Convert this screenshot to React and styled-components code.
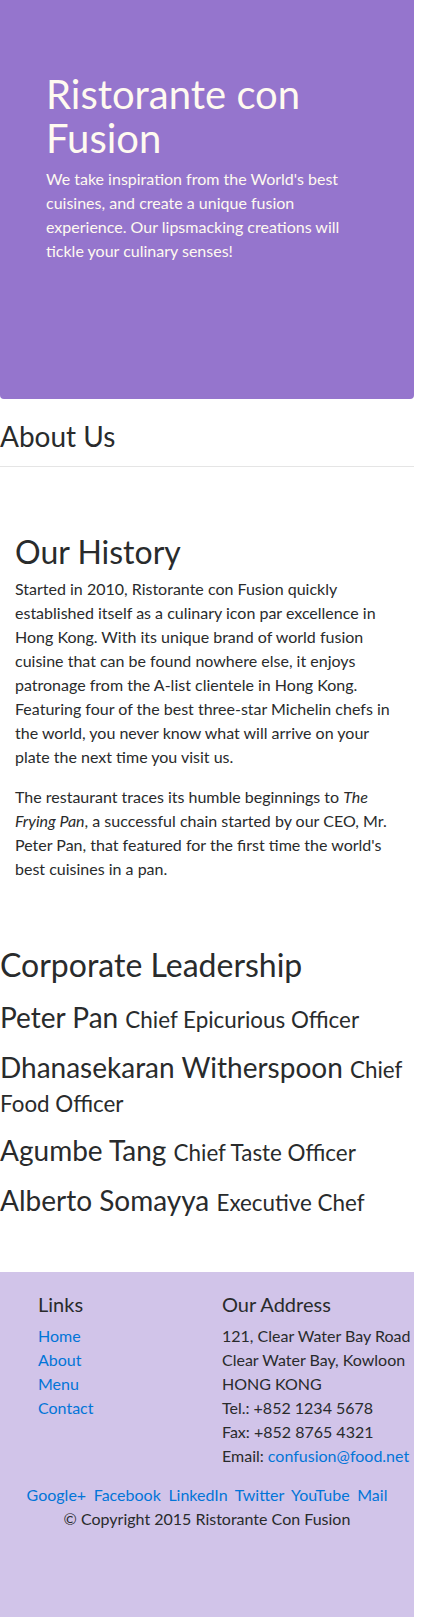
import React from "react"
import styled, { createGlobalStyle } from "styled-components"

const GlobalStyle = createGlobalStyle`
  html, body {
    margin: 0;
    padding: 0;
    background: #fff;
  }
  body {
    font-family: Lato, "Open Sans", sans-serif;
    font-size: 16px;
    line-height: 24px;
    color: #292b2c;
  }
  a {
    color: #0275d8;
    text-decoration: none;
  }
`

const Page = styled.div`
  width: 414px;
  min-height: 100vh;
  display: flex;
  flex-direction: column;
`

const Jumbotron = styled.header`
  background-color: #9575cd;
  color: floralwhite;
  padding: 72px 46px 136px;
  border-radius: 0 0 4px 4px;
`

const HeroTitle = styled.h1`
  margin: 0 0 7px;
  font-size: 40px;
  line-height: 44px;
  font-weight: 400;
`

const HeroText = styled.p`
  margin: 0;
`

const Main = styled.main`
  padding-bottom: 55px;
`

const PageTitle = styled.h3`
  margin: 21px 0 0;
  font-size: 28px;
  line-height: 1.2;
  font-weight: 400;
`

const Divider = styled.hr`
  margin: 12px 0 0;
  border: 0;
  border-top: 1px solid rgba(0, 0, 0, 0.1);
`

const History = styled.section`
  padding: 66px 15px 0;
`

const SectionTitle = styled.h2`
  margin: 0 0 6px;
  font-size: 32px;
  line-height: 1.2;
  font-weight: 400;
`

const Para = styled.p`
  margin: 0 0 16px;
`

const Leadership = styled.section`
  padding-top: 49px;
`

const LeaderList = styled.div`
  padding-top: 11px;
`

const Leader = styled.h3`
  margin: 0 0 16px;
  font-size: 28px;
  line-height: 1.2;
  font-weight: 400;

  &:last-child {
    margin-bottom: 0;
  }
`

const Role = styled.small`
  font-size: 80%;
`

const Footer = styled.footer`
  flex: 1;
  background-color: #d1c4e9;
  padding: 20px 0;
`

const FooterRow = styled.div`
  display: grid;
  grid-template-columns: 184px 1fr;
  padding-left: 38px;
  margin-bottom: 15px;
`

const FooterHeading = styled.h5`
  margin: 0 0 8px;
  font-size: 20px;
  line-height: 24px;
  font-weight: 400;
`

const LinkList = styled.ul`
  list-style: none;
  margin: 0;
  padding: 0;
`

const Address = styled.address`
  font-style: normal;
  white-space: nowrap;
`

const Social = styled.div`
  text-align: center;
  word-spacing: 3.5px;
`

const Copyright = styled.p`
  margin: 0;
  text-align: center;
`

const leaders = [
  { name: "Peter Pan", role: "Chief Epicurious Officer" },
  { name: "Dhanasekaran Witherspoon", role: "Chief Food Officer" },
  { name: "Agumbe Tang", role: "Chief Taste Officer" },
  { name: "Alberto Somayya", role: "Executive Chef" },
]

const links = ["Home", "About", "Menu", "Contact"]
const socials = ["Google+", "Facebook", "LinkedIn", "Twitter", "YouTube", "Mail"]

export default function App() {
  return (
    <>
      <GlobalStyle />
      <Page>
        <Jumbotron>
          <HeroTitle>Ristorante con Fusion</HeroTitle>
          <HeroText>
            We take inspiration from the World's best cuisines, and create a
            unique fusion experience. Our lipsmacking creations will tickle your
            culinary senses!
          </HeroText>
        </Jumbotron>

        <Main>
          <PageTitle>About Us</PageTitle>
          <Divider />

          <History>
            <SectionTitle>Our History</SectionTitle>
            <Para>
              Started in 2010, Ristorante con Fusion quickly established itself
              as a culinary icon par excellence in Hong Kong. With its unique
              brand of world fusion cuisine that can be found nowhere else, it
              enjoys patronage from the A-list clientele in Hong Kong. Featuring
              four of the best three-star Michelin chefs in the world, you never
              know what will arrive on your plate the next time you visit us.
            </Para>
            <Para>
              The restaurant traces its humble beginnings to <em>The Frying Pan</em>,
              a successful chain started by our CEO, Mr. Peter Pan, that featured
              for the first time the world's best cuisines in a pan.
            </Para>
          </History>

          <Leadership>
            <SectionTitle>Corporate Leadership</SectionTitle>
            <LeaderList>
              {leaders.map((l) => (
                <Leader key={l.name}>
                  {l.name} <Role>{l.role}</Role>
                </Leader>
              ))}
            </LeaderList>
          </Leadership>
        </Main>

        <Footer>
          <FooterRow>
            <div>
              <FooterHeading>Links</FooterHeading>
              <LinkList>
                {links.map((l) => (
                  <li key={l}>
                    <a href="#">{l}</a>
                  </li>
                ))}
              </LinkList>
            </div>
            <div>
              <FooterHeading>Our Address</FooterHeading>
              <Address>
                121, Clear Water Bay Road
                <br />
                Clear Water Bay, Kowloon
                <br />
                HONG KONG
                <br />
                Tel.: +852 1234 5678
                <br />
                Fax: +852 8765 4321
                <br />
                Email: <a href="mailto:confusion@food.net">confusion@food.net</a>
              </Address>
            </div>
          </FooterRow>
          <Social>
            {socials.map((s, i) => (
              <React.Fragment key={s}>
                {i > 0 && " "}
                <a href="#">{s}</a>
              </React.Fragment>
            ))}
          </Social>
          <Copyright>© Copyright 2015 Ristorante Con Fusion</Copyright>
        </Footer>
      </Page>
    </>
  )
}
